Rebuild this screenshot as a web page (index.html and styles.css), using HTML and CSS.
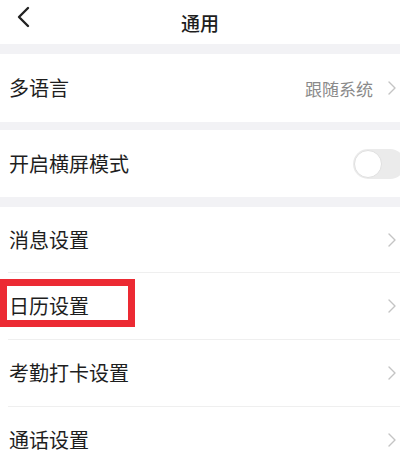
FILE: index.html
```html
<!DOCTYPE html>
<html lang="zh-CN">
<head>
    <meta charset="UTF-8">
    <meta name="viewport" content="width=device-width, initial-scale=1.0">
    <title>通用</title>
    <link rel="stylesheet" href="styles.css">
</head>
<body>

    <div class="header">
        <svg class="back" width="14" height="22" viewBox="0 0 14 22">
            <path d="M12 2 L3 11 L12 20" fill="none" stroke="#222" stroke-width="2.4" stroke-linecap="round" stroke-linejoin="round"/>
        </svg>
        <h1 class="title">通用</h1>
    </div>

    <div class="band"></div>

    <div class="row row-first">
        <span class="label">多语言</span>
        <div class="right">
            <span class="value">跟随系统</span>
            <svg class="arrow" width="10" height="14" viewBox="0 0 10 14">
                <path d="M2 1 L8 7 L2 13" fill="none" stroke="#c4c4c4" stroke-width="1.4" stroke-linecap="round" stroke-linejoin="round"/>
            </svg>
        </div>
    </div>

    <div class="band band-small"></div>

    <div class="row">
        <span class="label">开启横屏模式</span>
        <div class="switch"><div class="knob"></div></div>
    </div>

    <div class="band"></div>

    <div class="list">
        <div class="row item">
            <span class="label">消息设置</span>
            <svg class="arrow" width="10" height="14" viewBox="0 0 10 14">
                <path d="M2 1 L8 7 L2 13" fill="none" stroke="#c4c4c4" stroke-width="1.4" stroke-linecap="round" stroke-linejoin="round"/>
            </svg>
        </div>
        <div class="row item">
            <span class="label">日历设置</span>
            <svg class="arrow" width="10" height="14" viewBox="0 0 10 14">
                <path d="M2 1 L8 7 L2 13" fill="none" stroke="#c4c4c4" stroke-width="1.4" stroke-linecap="round" stroke-linejoin="round"/>
            </svg>
            <div class="redbox"></div>
        </div>
        <div class="row item">
            <span class="label">考勤打卡设置</span>
            <svg class="arrow" width="10" height="14" viewBox="0 0 10 14">
                <path d="M2 1 L8 7 L2 13" fill="none" stroke="#c4c4c4" stroke-width="1.4" stroke-linecap="round" stroke-linejoin="round"/>
            </svg>
        </div>
        <div class="row item">
            <span class="label">通话设置</span>
            <svg class="arrow" width="10" height="14" viewBox="0 0 10 14">
                <path d="M2 1 L8 7 L2 13" fill="none" stroke="#c4c4c4" stroke-width="1.4" stroke-linecap="round" stroke-linejoin="round"/>
            </svg>
        </div>
    </div>

</body>
</html>
```

FILE: styles.css
```css
*{
    margin: 0;
    padding: 0;
    box-sizing: border-box;
}

body{
    width: 400px;
    background: #fff;
    font-family: "Noto Sans CJK SC", "Noto Sans", sans-serif;
    color: #1e1e1e;
    overflow: hidden;
}

.header{
    height: 44px;
    display: flex;
    align-items: center;
    justify-content: center;
    position: relative;
}

.back{
    position: absolute;
    left: 16px;
    top: 6px;
}

.title{
    font-size: 19px;
    font-weight: 500;
    line-height: 1;
}

.band{
    height: 10px;
    background: #f2f2f5;
}

.band-small{
    height: 8px;
}

.row{
    height: 67px;
    display: flex;
    align-items: center;
    justify-content: space-between;
    padding-left: 9px;
    padding-right: 3px;
}

.row-first{
    height: 68px;
}

.label{
    font-size: 20px;
    line-height: 1;
}

.right{
    display: flex;
    align-items: center;
    gap: 14px;
}

.value{
    font-size: 17px;
    color: #8a8a8a;
    line-height: 1;
}

.arrow{
    display: block;
}

.switch{
    width: 52px;
    height: 30px;
    border-radius: 15px;
    background: #ebebeb;
    margin-right: -8px;
    padding: 1px;
}

.knob{
    width: 28px;
    height: 28px;
    border-radius: 50%;
    background: #fff;
    border: 1px solid #e0e0e0;
}

.list .item{
    height: 67px;
    margin-left: 8px;
    padding-left: 1px;
    border-bottom: 1px solid #efefef;
    position: relative;
}

.list .item:first-child{
    height: 66px;
}

.redbox{
    position: absolute;
    left: -8px;
    top: 6px;
    width: 135px;
    height: 48px;
    border: 7px solid #ec2a33;
}
```
